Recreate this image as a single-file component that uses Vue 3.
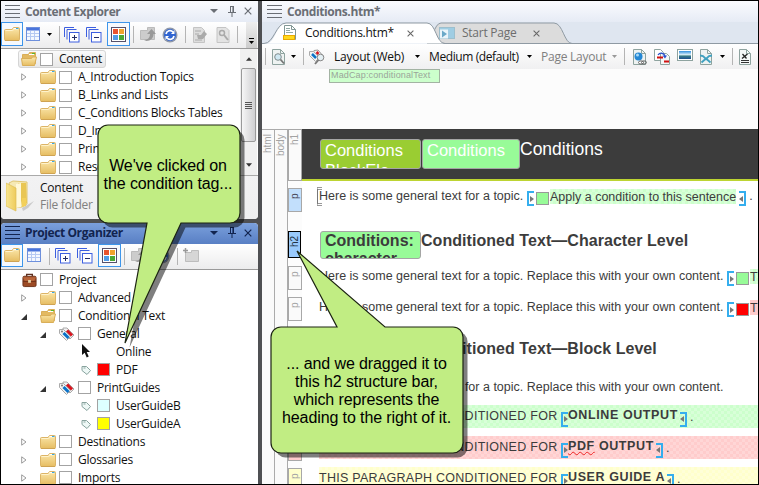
<script setup>
const explorerRows = [
  { label: 'A_Introduction Topics' },
  { label: 'B_Links and Lists' },
  { label: 'C_Conditions Blocks Tables' },
  { label: 'D_Images' },
  { label: 'PrintOutput' },
  { label: 'Resources' },
]

const projectRows = [
  { label: 'Project', level: 0, arrow: '', icon: 'i-case', box: 'white' },
  { label: 'Advanced', level: 1, arrow: 'closed', icon: 'i-folder', box: 'white' },
  { label: 'Conditional Text', level: 1, arrow: 'open', icon: 'i-folder-open', box: 'white' },
  { label: 'General', level: 2, arrow: 'open', icon: 'i-tags', box: 'white' },
  { label: 'Online', level: 3, arrow: '', icon: 'i-cursor', box: 'none' },
  { label: 'PDF', level: 3, arrow: '', icon: 'i-tag', box: 'red' },
  { label: 'PrintGuides', level: 2, arrow: 'open', icon: 'i-tags', box: 'white' },
  { label: 'UserGuideB', level: 3, arrow: '', icon: 'i-tag', box: 'cyan' },
  { label: 'UserGuideA', level: 3, arrow: '', icon: 'i-tag', box: 'yellow' },
  { label: 'Destinations', level: 1, arrow: 'closed', icon: 'i-folder', box: 'white' },
  { label: 'Glossaries', level: 1, arrow: 'closed', icon: 'i-folder', box: 'white' },
  { label: 'Imports', level: 1, arrow: 'closed', icon: 'i-folder', box: 'white' },
]

const blocks = [
  { tone: 'green', text: 'ONLINE OUTPUT' },
  { tone: 'red', text: 'PDF OUTPUT' },
  { tone: 'yellow', text: 'USER GUIDE A' },
]
</script>

<template>
  <svg class="defs" width="0" height="0">
    <defs>
      <linearGradient id="gFolder" x1="0" y1="0" x2="0" y2="1">
        <stop offset="0" stop-color="#fbe7ab" /><stop offset="1" stop-color="#e6bd62" />
      </linearGradient>
      <linearGradient id="gBlue" x1="0" y1="0" x2="0" y2="1">
        <stop offset="0" stop-color="#2f8fe0" /><stop offset=".5" stop-color="#e8f6fa" /><stop offset=".6" stop-color="#3b7f86" /><stop offset="1" stop-color="#1d4f8f" />
      </linearGradient>
      <linearGradient id="gBig" x1="0" y1="0" x2="1" y2="0">
        <stop offset="0" stop-color="#f8e690" /><stop offset="1" stop-color="#eecb5c" />
      </linearGradient>
    </defs>
    <symbol id="i-folder" viewBox="0 0 16 14">
      <path d="M.5 12.500V3.500q0-1 1-1h6.500l1.500-2h5q1 0 1 1v11q0 1-1 1h-13q-1 0-1-1z" fill="url(#gFolder)" stroke="#dcb467" />
      <path d="M1.500 3.500h7L10.500 2H14" fill="none" stroke="#fff3cc" />
      <path d="M9.500 1.500h3" stroke="#fff" /><path d="M12 1.500h2.500" stroke="#39a9e8" />
      <path d="M1 13.500h14" stroke="#cfa352" />
    </symbol>
    <symbol id="i-folder-open" viewBox="0 0 16 14">
      <path d="M1.500 12.500v-10h6l1-2h6v11z" fill="#e3b961" stroke="#d9ae58" />
      <path d="M8 2.500h5" stroke="#fff" /><path d="M11 1.500h3" stroke="#55b930" />
      <path d="M.5 6.500h10l1-1.500h4l-2 8.500h-12z" fill="url(#gFolder)" stroke="#d9ae58" />
    </symbol>
    <symbol id="i-case" viewBox="0 0 16 16">
      <path d="M5 4V2h6v2" fill="none" stroke="#5e3020" stroke-width="1.500" />
      <rect x="1" y="4" width="14" height="11" rx="1.500" fill="#9c4a24" stroke="#6d3119" />
      <path d="M1 5l2 4h10l2-4" fill="#b9653a" /><path d="M1 9.500h14" stroke="#6d3119" />
      <rect x="6.500" y="8" width="3" height="3" fill="#e6d3a8" />
    </symbol>
    <symbol id="i-tags" viewBox="0 0 16 14">
      <path d="M4 1l4 0 7 7-4 4-7-7z" fill="#f3f3f3" stroke="#aaa" />
      <path d="M8 3.500l5 5" stroke="#d8131d" stroke-width="3" />
      <path d="M.5 2.500h4l7 7-4 4-7-7z" fill="#f3f3f3" stroke="#aaa" />
      <path d="M4.500 6l5 5" stroke="#0a73c8" stroke-width="3" />
      <circle cx="3" cy="4.500" r="1" fill="#777" />
    </symbol>
    <symbol id="i-tag" viewBox="0 0 10 10">
      <path d="M1 1.500h4.500l4 4-3.500 4-5-4z" fill="#eef8f6" stroke="#88a39e" />
      <path d="M2.500 3h2" stroke="#88a39e" />
    </symbol>
    <symbol id="i-cursor" viewBox="0 0 10 15">
      <path d="M1 0v11l2.700-2.300 2 4.800 2-1-2-4.500H9z" fill="#111" />
    </symbol>
    <symbol id="i-grid" viewBox="0 0 14 14">
      <rect x=".5" y=".5" width="13" height="13" fill="#f4f8ff" stroke="#6d8fdc" />
      <rect x="1" y="1" width="12" height="2.500" fill="#4a75dc" />
      <path d="M1 6.500h12M1 9.500h12M4.500 4v9M8.500 4v9" stroke="#b5c9f2" />
    </symbol>
    <symbol id="i-plus" viewBox="0 0 16 16">
      <path d="M.5 10V.5H10M3 12.500V2.500h9.500" fill="none" stroke="#3c5fe0" />
      <rect x="5.500" y="5.500" width="9.500" height="9.500" fill="#fff" stroke="#3c5fe0" />
      <path d="M8 10.500h5M10.500 8v5" stroke="#222c66" />
    </symbol>
    <symbol id="i-minus" viewBox="0 0 16 16">
      <path d="M.5 10V.5H10M3 12.500V2.500h9.500" fill="none" stroke="#3c5fe0" />
      <rect x="5.500" y="5.500" width="9.500" height="9.500" fill="#fff" stroke="#3c5fe0" />
      <path d="M8 10.500h5" stroke="#222c66" />
    </symbol>
    <symbol id="i-tiles" viewBox="0 0 15 15">
      <rect x=".5" y=".5" width="14" height="14" fill="#fff" stroke="#55506a" />
      <rect x="2" y="2" width="5" height="5" fill="#e8532f" /><rect x="8" y="2" width="5" height="5" fill="#f0a32c" />
      <rect x="2" y="8" width="5" height="5" fill="#4f9be8" /><rect x="8" y="8" width="5" height="5" fill="#4ba836" />
    </symbol>
    <symbol id="i-up" viewBox="0 0 16 14">
      <path d="M.5 12.500v-9h7v-3h7v12z" fill="#ccc" stroke="#bbb" />
      <path d="M4 13c4 0 6-3 6-6H7l4.500-5L16 7h-2.500c0 4-3 7-7 7z" fill="#999" />
    </symbol>
    <symbol id="i-refresh" viewBox="0 0 16 16">
      <circle cx="8" cy="8" r="7.500" fill="#8f98aa" />
      <circle cx="8" cy="8" r="6" fill="#2f64d2" />
      <path d="M4 7a4 4 0 0 1 7-2M12 9a4 4 0 0 1-7 2" fill="none" stroke="#fff" stroke-width="1.700" />
      <path d="M12.500 3v4H9zM3.500 13V9H7z" fill="#fff" />
    </symbol>
    <symbol id="i-docgo" viewBox="0 0 16 16">
      <path d="M1.500.5h8l3 3v12h-11z" fill="#ddd" stroke="#c4c4c4" />
      <path d="M3 4h6M3 7h4M3 13h7" stroke="#aaa" /><path d="M5 8h4l3-4 3 3-4 5H6z" fill="#aaa" />
    </symbol>
    <symbol id="i-docwrench" viewBox="0 0 14 16">
      <path d="M1 .5h9l3 3v12H1z" fill="#e3e3e3" stroke="#c4c4c4" />
      <circle cx="6" cy="6" r="2.500" fill="none" stroke="#aaa" stroke-width="1.500" /><path d="M8 8l4 5" stroke="#aaa" stroke-width="2" />
    </symbol>
    <symbol id="i-newfolder" viewBox="0 0 16 14">
      <path d="M2.500 13.500v-9h6v-2h7v11z" fill="#d6d6d6" stroke="#bdbdbd" /><path d="M0 2.500h5M2.500 0v5" stroke="#999" stroke-width="1.500" />
    </symbol>
    <symbol id="i-preview" viewBox="0 0 13 16">
      <path d="M.5.500h8l4 4v11H.5z" fill="#eef3f2" stroke="#8ea39f" /><path d="M8.500.5v4h4" fill="none" stroke="#8ea39f" />
      <circle cx="6" cy="8" r="3.300" fill="#cfe8f2" stroke="#808b8c" /><path d="M8.500 10.500l3.500 4" stroke="#777" stroke-width="1.800" />
    </symbol>
    <symbol id="i-tagfind" viewBox="0 0 16 16">
      <path d="M5 1.500l4-.5 6 7-4 4-7-6z" fill="#f3f3f3" stroke="#999" /><path d="M7.500 3l2 2" stroke="#d8131d" stroke-width="2.500" />
      <path d="M.5 2.500h4l6 6-4 4-6-6z" fill="#f3f3f3" stroke="#aaa" /><path d="M3 5l4 4" stroke="#0a73c8" stroke-width="2.500" />
      <circle cx="11.500" cy="8.500" r="3.300" fill="#e4eff3" stroke="#888" /><path d="M9.500 11L6 15" stroke="#777" stroke-width="1.800" />
    </symbol>
    <symbol id="i-doc" viewBox="0 0 14 16">
      <path d="M1.500.5h7l4 4v10h-11z" fill="#fff" stroke="#819794" /><path d="M8.500.5v4h4" fill="none" stroke="#819794" />
      <path d="M3 3.500h4M3 5.500h4M3 7.500h7" stroke="#91aaa5" />
      <rect x=".5" y="10.500" width="11" height="4" fill="#ffd91b" stroke="#e9a900" />
    </symbol>
    <symbol id="i-start" viewBox="0 0 16 12">
      <rect x=".5" y=".5" width="15" height="11" fill="#9fcde3" stroke="#9dbfcd" /><rect x="1" y="2.500" width="8" height="9" fill="#eaf5fa" />
      <path d="M3 3.500l5 3.500-5 3.500z" fill="#6aa9c8" />
    </symbol>
    <symbol id="i-link" viewBox="0 0 14 16">
      <path d="M.5.500h8l4 4v11H.5z" fill="#eef3f2" stroke="#8ea39f" /><path d="M8.500.5v4h4" fill="none" stroke="#8ea39f" />
      <circle cx="5.500" cy="7.500" r="4" fill="#2588d4" /><circle cx="4.500" cy="6" r="1.500" fill="#a8dbf7" />
      <ellipse cx="8" cy="13.500" rx="2.500" ry="1.600" fill="#fff" stroke="#666" /><ellipse cx="11" cy="13.500" rx="2.500" ry="1.600" fill="none" stroke="#666" />
    </symbol>
    <symbol id="i-xref" viewBox="0 0 16 16">
      <path d="M.5.500h6l3 3v8h-9z" fill="#fff" stroke="#8ea39f" /><path d="M6.500 4.500h6l3 3v8h-9z" fill="#f4f7f7" stroke="#8ea39f" />
      <path d="M3 8.500h6M10 12.500h5" stroke="#d01111" stroke-width="2" /><path d="M4 6c2-3 6-2 7 1" fill="none" stroke="#2a52cc" stroke-width="1.300" /><path d="M8.500 6.500h4.500l-2 3z" fill="#2a52cc" />
    </symbol>
    <symbol id="i-image" viewBox="0 0 16 12">
      <rect x=".5" y=".5" width="15" height="11" fill="#fff" stroke="#8ea39f" /><rect x="2" y="2" width="12" height="8" fill="url(#gBlue)" />
    </symbol>
    <symbol id="i-docx" viewBox="0 0 12 16">
      <path d="M.5.500h7l4 4v11H.5z" fill="#eef3f2" stroke="#8ea39f" /><path d="M7.500.5v4h4" fill="none" stroke="#8ea39f" />
      <path d="M0 6.500l3 .5 3 3 3-3 3-.5M1.500 13.500L6 9.500l4.500 4" fill="none" stroke="#3fa0bf" stroke-width="1.800" />
    </symbol>
    <symbol id="i-var" viewBox="0 0 12 16">
      <path d="M.5.500h7l4 4v11H.5z" fill="#f4f7f7" stroke="#8ea39f" /><path d="M7.500.5v4h4" fill="none" stroke="#8ea39f" />
      <path d="M3.500 5l4 4.500M8.500 5L3 9.500" stroke="#222" stroke-width="1.300" /><path d="M2 11.500h8M2 13.500h8" stroke="#333" />
    </symbol>
    <symbol id="i-pin" viewBox="0 0 8 11">
      <path d="M2 .5h4M2.500 0v6M5.500 0v6M4.900 0v6M0 6.500h8M4 7v4" fill="none" stroke="currentColor" />
    </symbol>
    <symbol id="i-x" viewBox="0 0 8 8"><path d="M.7.700l6.600 6.600M7.300.7L.7 7.300" stroke="currentColor" stroke-width="1.200" /></symbol>
    <symbol id="i-down" viewBox="0 0 8 4"><path d="M0 0h8L4 4z" fill="currentColor" /></symbol>
    <symbol id="i-drop" viewBox="0 0 5 3"><path d="M0 0h5L2.500 3z" fill="currentColor" /></symbol>
    <symbol id="i-closed" viewBox="0 0 6 8"><path d="M.7.800L5 4 .7 7.200z" fill="#fff" stroke="#9a9a9a" /></symbol>
    <symbol id="i-opened" viewBox="0 0 6 6"><path d="M6 0v6H0z" fill="#333" /></symbol>
    <symbol id="i-bigfolder" viewBox="0 0 28 32">
      <path d="M16 28l12-7-6 7-5 3z" fill="#bbb" opacity=".7" />
      <path d="M3 3l4-2 14 1v22l-5 3-9 1z" fill="#f5e9b5" stroke="#e0c673" />
      <path d="M12 3l8 0 1 20-5 3z" fill="#e9c654" /><path d="M10 4l5-1v24l-5 1z" fill="#fff8d8" />
      <path d="M0 3l10 5v23L0 26z" fill="url(#gBig)" stroke="#ddbf58" stroke-width=".7" />
      <path d="M16 18h4v8l-4 1z" fill="#f3d05a" />
    </symbol>
  </svg>

  <main class="window">
    <aside class="side">
      <section class="panel explorer">
        <header class="title">
          <i class="grip"></i><span class="title-text">Content Explorer</span>
          <svg class="t-down"><use href="#i-down" /></svg><svg class="t-pin"><use href="#i-pin" /></svg><svg class="t-x"><use href="#i-x" /></svg>
        </header>
        <div class="tools tools-explorer">
          <b class="sel"><svg class="s16x14"><use href="#i-folder" /></svg></b>
          <svg class="s14"><use href="#i-grid" /></svg>
          <svg class="drop"><use href="#i-drop" /></svg>
          <i class="sep"></i>
          <svg class="s16"><use href="#i-plus" /></svg>
          <svg class="s16"><use href="#i-minus" /></svg>
          <b class="sel"><svg class="s15"><use href="#i-tiles" /></svg></b>
          <i class="sep"></i>
          <svg class="s16x14"><use href="#i-up" /></svg>
          <svg class="s16"><use href="#i-refresh" /></svg>
          <i class="sep"></i>
          <svg class="s16"><use href="#i-docgo" /></svg>
          <svg class="s14x16"><use href="#i-docwrench" /></svg>
          <i class="sep"></i>
          <span class="overflow"><i></i><svg class="drop"><use href="#i-drop" /></svg></span>
        </div>
        <div class="tree-wrap">
          <div class="tree">
            <div class="root"><svg class="s16x14"><use href="#i-folder-open" /></svg><i class="box"></i><span class="ui">Content</span></div>
            <div v-for="r in explorerRows" :key="r.label" class="row lvl1">
              <span class="arrow"><svg class="closed"><use href="#i-closed" /></svg></span>
              <span class="ico"><svg class="s16x14"><use href="#i-folder" /></svg></span>
              <i class="box"></i><span class="ui">{{ r.label }}</span>
            </div>
          </div>
          <div class="scroll">
            <svg class="sc-arrow up"><use href="#i-drop" /></svg>
            <div class="thumb"><i></i><i></i><i></i><i></i></div>
            <svg class="sc-arrow"><use href="#i-drop" /></svg>
          </div>
        </div>
        <footer class="info">
          <svg class="big"><use href="#i-bigfolder" /></svg>
          <div class="info-text"><span class="ui">Content</span><span class="ui dim">File folder</span></div>
        </footer>
      </section>

      <section class="panel organizer">
        <header class="title active">
          <i class="grip"></i><span class="title-text">Project Organizer</span>
          <svg class="t-down"><use href="#i-down" /></svg><svg class="t-pin"><use href="#i-pin" /></svg><svg class="t-x"><use href="#i-x" /></svg>
        </header>
        <div class="tools tools-organizer">
          <b class="sel"><svg class="s16x14"><use href="#i-folder" /></svg></b>
          <svg class="s14"><use href="#i-grid" /></svg>
          <i class="sep"></i>
          <svg class="s16"><use href="#i-plus" /></svg>
          <svg class="s16"><use href="#i-minus" /></svg>
          <b class="sel"><svg class="s15"><use href="#i-tiles" /></svg></b>
          <i class="sep"></i>
          <svg class="s16x14"><use href="#i-up" /></svg>
          <svg class="s16"><use href="#i-refresh" /></svg>
          <i class="sep"></i>
          <svg class="s16x14"><use href="#i-newfolder" /></svg>
        </div>
        <div class="tree project">
          <div v-for="r in projectRows" :key="r.label" class="row" :class="'lvl' + r.level">
            <span class="arrow">
              <svg v-if="r.arrow === 'closed'" class="closed"><use href="#i-closed" /></svg>
              <svg v-if="r.arrow === 'open'" class="opened"><use href="#i-opened" /></svg>
            </span>
            <span class="ico"><svg :class="r.icon"><use :href="'#' + r.icon" /></svg></span>
            <i class="box" :class="r.box"></i><span class="ui">{{ r.label }}</span>
          </div>
        </div>
      </section>
    </aside>

    <section class="editor">
      <header class="title doc-title"><i class="grip"></i><span class="title-text">Conditions.htm*</span></header>
      <div class="tabs">
        <svg class="tab-shapes" viewBox="0 0 496 22">
          <path d="M165 21.500c5-1 7-20.500 14-20.500h113c9 0 10 20.500 18 20.500z" fill="#dcdcdc" stroke="#8f9aa3" />
          <path d="M0 21.500h4C14 21.500 14 1 24 1h141c9 0 9 20.500 18 20.500" fill="#fff" />
          <path d="M0 21.500h2C12 21.500 14 1 24 1h141c9 0 9 20.500 18 20.500H496" fill="none" stroke="#8f9aa3" />
        </svg>
        <div class="tab-a"><svg class="s14x16"><use href="#i-doc" /></svg><span class="ui">Conditions.htm*</span><svg class="tab-x"><use href="#i-x" /></svg></div>
        <div class="tab-b"><svg class="s16x12"><use href="#i-start" /></svg><span class="ui">Start Page</span><svg class="tab-x"><use href="#i-x" /></svg></div>
      </div>
      <div class="tools tools-doc">
        <i class="sep"></i>
        <svg class="s13x16"><use href="#i-preview" /></svg>
        <svg class="drop"><use href="#i-drop" /></svg>
        <i class="sep"></i>
        <svg class="s16 lead"><use href="#i-tagfind" /></svg>
        <span class="ui lead">Layout (Web)</span>
        <svg class="drop"><use href="#i-drop" /></svg>
        <span class="ui lead pad medium">Medium (default)</span>
        <svg class="drop"><use href="#i-drop" /></svg>
        <span class="ui lead pad gray">Page Layout</span>
        <svg class="drop gray"><use href="#i-drop" /></svg>
        <i class="sep"></i>
        <svg class="s14x16"><use href="#i-link" /></svg>
        <svg class="s16"><use href="#i-xref" /></svg>
        <svg class="s16x12 raise"><use href="#i-image" /></svg>
        <svg class="s12x16"><use href="#i-docx" /></svg>
        <svg class="drop"><use href="#i-drop" /></svg>
        <i class="sep"></i>
        <svg class="s12x16"><use href="#i-var" /></svg>
      </div>
      <div class="canvas-top"><span class="span-bar">MadCap:conditionalText</span></div>
      <div class="doc">
        <div class="bar">html</div>
        <div class="bar">body</div>
        <div class="bars">
          <div class="tagbar b-h1">h1</div>
          <div class="tagbar b-sel">p</div>
          <div class="tagbar b-h2">h2</div>
          <div class="tagbar">p</div>
          <div class="tagbar gap7">p</div>
          <div class="tagbar b-hid">h2</div>
          <div class="tagbar b-red">p</div>
          <div class="tagbar b-yellow">p</div>
        </div>
        <article class="page">
          <h1><span class="chip olive">Conditions BlockEle</span><span class="chip green">Conditions</span><span class="h1-text">Conditions</span></h1>
          <div class="line l1">
            <i class="caret"></i><p class="topic">Here is some general text for a topic.</p>
            <i class="br open"></i><i class="sq"></i><p class="hl">Apply a condition to this sentence</p><i class="br close"></i><p class="dot">.</p>
          </div>
          <h2 class="first"><span class="chip2">Conditions: character</span><span>Conditioned Text—Character Level</span></h2>
          <div class="line l2"><p class="full">Here is some general text for a topic. Replace this with your own content.</p><i class="br open"></i><i class="sq"></i><p class="hl">This</p></div>
          <div class="line l3"><p class="full">Here is some general text for a topic. Replace this with your own content.</p><i class="br open"></i><i class="sq red"></i><p class="hl hl-red">This</p></div>
          <h2 class="second"><span class="chip2">Conditions</span><span>Conditioned Text—Block Level</span></h2>
          <div class="line l4"><p class="full">Here is some general text for a topic. Replace this with your own content.</p></div>
          <div v-for="b in blocks" :key="b.tone" class="block" :class="b.tone">
            <p class="caps">THIS PARAGRAPH CONDITIONED FOR</p><i class="br open"></i>
            <strong v-if="b.tone === 'red'"><span class="squiggle">PDF</span> OUTPUT</strong><strong v-else>{{ b.text }}</strong>
            <i class="br close"></i><p class="dot">.</p>
          </div>
        </article>
      </div>
    </section>

    <svg class="callouts" viewBox="0 0 759 485">
      <g fill="#000" fill-opacity=".5" transform="translate(4.500 4.500)">
        <path d="M108 125.500H230a10 10 0 0 1 10 10V213a10 10 0 0 1-10 10H181L125 343 147 223H108a10 10 0 0 1-10-10V135.500a10 10 0 0 1 10-10z" />
        <path d="M281 327H453a10 10 0 0 1 10 10V443a10 10 0 0 1-10 10H281a10 10 0 0 1-10-10V337a10 10 0 0 1 10-10z" />
      </g>
      <g fill="#c1ed83" stroke="#1c2412" stroke-width="1.200">
        <path d="M108 125H230a10 10 0 0 1 10 10V213a10 10 0 0 1-10 10H181L125 343 147 223H108a10 10 0 0 1-10-10V135a10 10 0 0 1 10-10z" />
        <path d="M281 327H337L297 251 385 327H453a10 10 0 0 1 10 10V443a10 10 0 0 1-10 10H281a10 10 0 0 1-10-10V337a10 10 0 0 1 10-10z" />
      </g>
    </svg>
    <div class="note note-a"><span>We've clicked on</span><span>the condition tag...</span></div>
    <div class="note note-b"><span>... and we dragged it to</span><span>this h2 structure bar,</span><span>which represents the</span><span>heading to the right of it.</span></div>
  </main>
</template>

<style>
body { margin: 0; overflow: hidden; }
</style>

<style scoped>
* { box-sizing: border-box; }
p, h1, h2 { margin: 0; font-weight: normal; }
svg { display: block; flex: none; }
.defs { position: absolute; }
.window { position: relative; width: 759px; height: 485px; border: 1px solid #000; background: #4f5053; display: flex; gap: 4px; overflow: hidden; font-family: "Open Sans", "Noto Sans", sans-serif; font-size: 12px; color: #111; }
.side { width: 257px; display: flex; flex-direction: column; gap: 4px; flex: none; }
.panel { display: flex; flex-direction: column; background: #fff; overflow: hidden; }
.explorer { height: 218px; border-radius: 0 0 4px 4px; }
.organizer { height: 262px; border-radius: 4px 4px 0 0; }
.title { height: 21px; flex: none; display: flex; align-items: center; padding: 0 6px 1px 4px; background: linear-gradient(#fafbfe, #e6ebf5); color: #6a6e75; }
.title.active { height: 21px; background: linear-gradient(#7ba0dc, #587fc4); color: #12244f; }
.grip { width: 15px; height: 13px; background: repeating-linear-gradient(currentColor 0 1px, transparent 1px 4px); }
.title-text { margin-left: 5px; font-weight: 700; font-size: 12px; letter-spacing: -0.4px; flex: 1; white-space: nowrap; }
.t-down { width: 8px; height: 4px; }
.t-pin { width: 8px; height: 11px; margin-left: 10px; }
.t-x { width: 8px; height: 8px; margin-left: 8px; }
.ui { font-size: 12px; line-height: 18px; letter-spacing: -0.25px; white-space: nowrap; }
.dim, .gray { color: #808080; }

.tools { display: grid; align-items: center; justify-items: center; background: linear-gradient(#fff, #ececed); flex: none; }
.tools-explorer { height: 27px; border-bottom: 1px solid #9a9a9a; align-items: start; grid-template-columns: 22px 20px 13px 6px 19px 26px 23px 7px 21px 23px 8px 22px 24px 5px 18px; }
.tools-explorer > * { margin-top: 4px; }
.tools-explorer > svg { margin-top: 5px; }
.tools-explorer > .drop { margin-top: 11px; }
.tools-organizer { height: 26px; border-bottom: 1px solid #9a9a9a; align-items: start; grid-template-columns: 22px 22px 8px 19px 26px 23px 7px 22px 24px 6px 21px; }
.tools-organizer > * { margin-top: 4px; }
.tools > .sel { margin-top: 0; width: 100%; height: 24px; border: 1px solid #3d95ea; background: #f6f9fd; display: flex; align-items: center; justify-content: center; }
.tools-organizer > .sel { height: 23px; }
.sep { width: 1px; height: 17px; background: #b4b4b4; }
.drop { width: 5px; height: 3px; color: #000; }
.drop.gray { color: #999; }
.overflow { align-self: stretch; display: flex; flex-direction: column; align-items: center; gap: 2px; width: 11px; margin-left: 4px; background: linear-gradient(#eee, #ccc); }
.tools-explorer > .overflow { margin-top: 0; padding-top: 16px; }
.overflow i { width: 5px; height: 1px; background: #000; }
.s16 { width: 16px; height: 16px; }
.s15 { width: 15px; height: 15px; }
.s14 { width: 14px; height: 14px; }
.s16x14 { width: 16px; height: 14px; }
.s16x12 { width: 16px; height: 12px; }
.s14x16 { width: 14px; height: 16px; }
.s13x16 { width: 13px; height: 16px; }
.s12x16 { width: 12px; height: 16px; }

.tree-wrap { height: 126px; display: flex; }
.tree { flex: 1; padding-top: 1px; overflow: hidden; }
.root { display: flex; width: 88px; align-items: center; height: 18px; margin-left: 17px; padding: 0 3px 0 2px; border: 1px solid #d5d5d5; border-radius: 3px; background: linear-gradient(#fafafa, #e8e8e8); }
.root .box { margin-left: 3px; }
.box { width: 13px; height: 13px; border: 1px solid #a3a3a3; background: #fff; flex: none; }
.root .ui, .row .ui { margin-left: 6px; }
.row { height: 18px; display: flex; align-items: center; }
.lvl0 { padding-left: 1px; }
.lvl1 { padding-left: 20px; }
.lvl2 { padding-left: 39px; }
.lvl3 { padding-left: 58px; }
.arrow { width: 16px; height: 8px; }
.closed { width: 6px; height: 8px; }
.opened { width: 6px; height: 6px; margin-top: 2px; }
.ico { width: 22px; display: flex; justify-content: center; }
.i-folder, .i-folder-open, .i-tags { width: 16px; height: 14px; }
.i-case { width: 15px; height: 16px; }
.i-tag { width: 10px; height: 10px; }
.i-cursor { width: 10px; height: 15px; }
.box.none { visibility: hidden; }
.box.red { background: #f00; }
.box.cyan { background: #dff; }
.box.yellow { background: #ff0; }
.scroll { width: 17px; display: flex; flex-direction: column; align-items: center; justify-content: space-between; background: #f0f0f0; padding: 8px 1px; margin-right: 1px; }
.sc-arrow { width: 6px; height: 4px; color: #333; }
.up { transform: rotate(180deg); }
.thumb { width: 15px; height: 74px; margin: 7px 0 auto; border: 1px solid #9a9a9a; border-radius: 2px; background: linear-gradient(90deg, #f6f6f6, #cfcfd1); display: flex; flex-direction: column; align-items: center; justify-content: center; gap: 1px; }
.thumb i { width: 7px; height: 1px; background: #555; }
.info { flex: 1; display: flex; border-top: 1px solid #aaa; background: linear-gradient(#f2f2f3, #efeff0); padding: 3px 0 0 5px; }
.big { width: 28px; height: 32px; margin-top: 1px; }
.info-text { display: flex; flex-direction: column; margin-left: 6px; }
.info-text .ui { line-height: 17px; }

.editor { flex: 1; min-width: 0; display: flex; flex-direction: column; background: #fcfcfc; }
.doc-title { padding-left: 5px; }
.tabs { position: relative; height: 22px; background: #dfe6f0; display: flex; align-items: center; flex: none; }
.tab-shapes { position: absolute; left: 0; top: 0; width: 496px; height: 22px; }
.tab-a, .tab-b { position: relative; display: flex; align-items: center; height: 22px; }
.tab-a { margin-left: 21px; width: 142px; }
.tab-a .ui { margin-left: 8px; width: 86px; }
.tab-a .tab-x { margin-left: 16px; }
.tab-b { margin-left: 14px; color: #6d6d6d; }
.tab-b .ui { margin-left: 7px; width: 55px; }
.tab-b .tab-x { margin-left: 16px; }
.tab-x { width: 7px; height: 7px; color: #666; }
.tools-doc { height: 25px; grid-template-columns: 7px 18px 13px 7px 27px 77px 13px 99px 13px 72px 12px 9px 21px 23px 23px 20px 13px 6px 20px; background: linear-gradient(#fff, #f0f0f1); }
.lead { justify-self: start; }
.tools-doc .s16.lead { margin-left: 2px; }
.pad { padding-left: 5px; }
.medium { letter-spacing: -0.4px; }
.raise { margin-bottom: 4px; }
.canvas-top { height: 60px; flex: none; padding-left: 67px; }
.span-bar { display: block; width: 111px; height: 14px; border: 1px solid #a3b3a3; background: #cfc; color: #9aa59a; font: 9px/11px "Liberation Sans", Arial, sans-serif; letter-spacing: 0.15px; padding-left: 1px; white-space: nowrap; }

.doc { flex: 1; min-height: 0; display: flex; background: #fff; font-family: "Liberation Sans", Arial, sans-serif; }
.bar, .tagbar { width: 13px; writing-mode: vertical-rl; transform: rotate(180deg); font-size: 10px; line-height: 11px; color: #a3a3a3; border-left: 1px solid #ababab; background: #fafafa; text-align: right; padding-top: 3px; flex: none; }
.bar { padding: 0 0 4px; border-bottom: 1px solid #ababab; }
.bars { width: 14px; flex: none; overflow: hidden; display: flex; flex-direction: column; background: #fcfcfc; }
.tagbar { width: 14px; height: 24px; border: 1px solid #a8a8a8; padding: 0 0 4px; }
.b-h1 { height: 52px; }
.b-sel { background: #c2dffc; margin-top: 7px; color: #445; }
.b-h2 { background: #99c9fb; border-color: #000; width: 13px; height: 27px; margin: 19px 0 8px; color: #234; }
.gap7 { margin-top: 7px; }
.b-hid { margin-top: 20px; height: 27px; }
.b-red { margin-top: 69px; background: #fcc; }
.b-yellow { margin-top: 7px; background: #ffc; }
.page { flex: 1; min-width: 0; overflow: hidden; display: flex; flex-direction: column; color: #3c3c3c; }
h1 { height: 52px; background: #3c3c3c; border-bottom: 2px solid #bdd432; padding: 10px 0 0 18px; display: flex; font-size: 16.500px; line-height: 20px; color: #fff; flex: none; }
.h1-text { font-size: 17.500px; }
.chip, .chip2 { overflow: hidden; border: 1px solid #a5a5a5; border-radius: 3px; flex: none; }
.chip { width: 101px; height: 30px; padding: 0 10px 0 4px; margin-right: 1px; }
.chip.green { width: 98px; margin-right: 0; }
.olive { background: #9acd32; }
.green { background: #98fb98; }
.line { display: flex; align-items: center; height: 24px; padding-left: 17px; font-size: 12.500px; white-space: nowrap; flex: none; }
.line > * { flex: none; }
.l1 { margin-top: 3px; }
.topic { width: 208px; }
.full { width: 408px; }
.caret { width: 5px; height: 19px; margin: 0 -3px 0 -2px; border-left: 1px solid #777; border-top: 3px double #999; border-bottom: 3px double #999; }
.br { width: 7px; height: 15px; border: 2px solid #35aeee; margin-top: 5px; display: flex; align-items: center; flex: none; }
.br::after { content: ""; border: 3px solid transparent; flex: none; }
.br.open { border-right: 0; }
.br.open::after { border-left: 4px solid #777; border-right: 0; margin-left: 1px; }
.br.close { border-left: 0; margin-left: 3px; }
.br.close::after { border-right: 4px solid #777; border-left: 0; }
.sq { width: 13px; height: 13px; border: 1px solid #999; background: #98fb98; margin: 5px 1px 0 2px; }
.sq.red { background: #f00; }
.hl { height: 15px; line-height: 16px; background: repeating-conic-gradient(#ccffcc 0 25%, #d8ffd8 0 50%) 0 0 / 6px 6px; }
.hl-red { background: #fcc; }
.dot { margin-left: 3px; }
h2 { display: flex; font-size: 16px; font-weight: bold; letter-spacing: 0.05px; flex: none; line-height: 19px; white-space: nowrap; padding-left: 18px; }
.first { height: 27px; margin-top: 23px; }
.chip2 { width: 101px; height: 28px; background: #98fb98; padding: 0 4px; white-space: normal; }
.first .chip2 { line-height: 18px; letter-spacing: 0; }
.l2 { margin-top: 6px; }
.l3 { margin-top: 7px; }
.second { height: 27px; margin-top: 20px; }
.l4 { margin-top: 9px; }
.block { height: 23px; margin: 0 0 8px 17px; display: flex; align-items: center; font-size: 12.500px; white-space: nowrap; flex: none; }
.l4 + .block { margin-top: 6px; }
.caps { width: 242px; letter-spacing: 0.27px; margin-top: -1px; }
.block.green { background: repeating-conic-gradient(#ccffcc 0 25%, #d8ffd8 0 50%) 0 0 / 6px 6px; }
.block.red { background: repeating-conic-gradient(#ffcccc 0 25%, #ffd6d6 0 50%) 0 0 / 6px 6px; }
.block.yellow { background: repeating-conic-gradient(#ffffcc 0 25%, #ffffd8 0 50%) 0 0 / 6px 6px; }
strong { margin-top: -3px; letter-spacing: 0.6px; }
.block .br.close { margin-left: 2px; }
.squiggle { text-decoration: underline wavy #e22 1px; text-underline-offset: 1px; }

.callouts { position: absolute; left: -1px; top: -1px; width: 759px; height: 485px; }
.note { position: absolute; display: flex; flex-direction: column; align-items: center; justify-content: center; font: 16px/18px "Liberation Sans", Arial, sans-serif; letter-spacing: -0.1px; color: #000; white-space: nowrap; }
.note-a { left: 97px; top: 124px; width: 140px; height: 98px; padding-top: 1px; }
.note-b { left: 270px; top: 326px; width: 191px; height: 126px; padding-top: 1px; }
</style>
